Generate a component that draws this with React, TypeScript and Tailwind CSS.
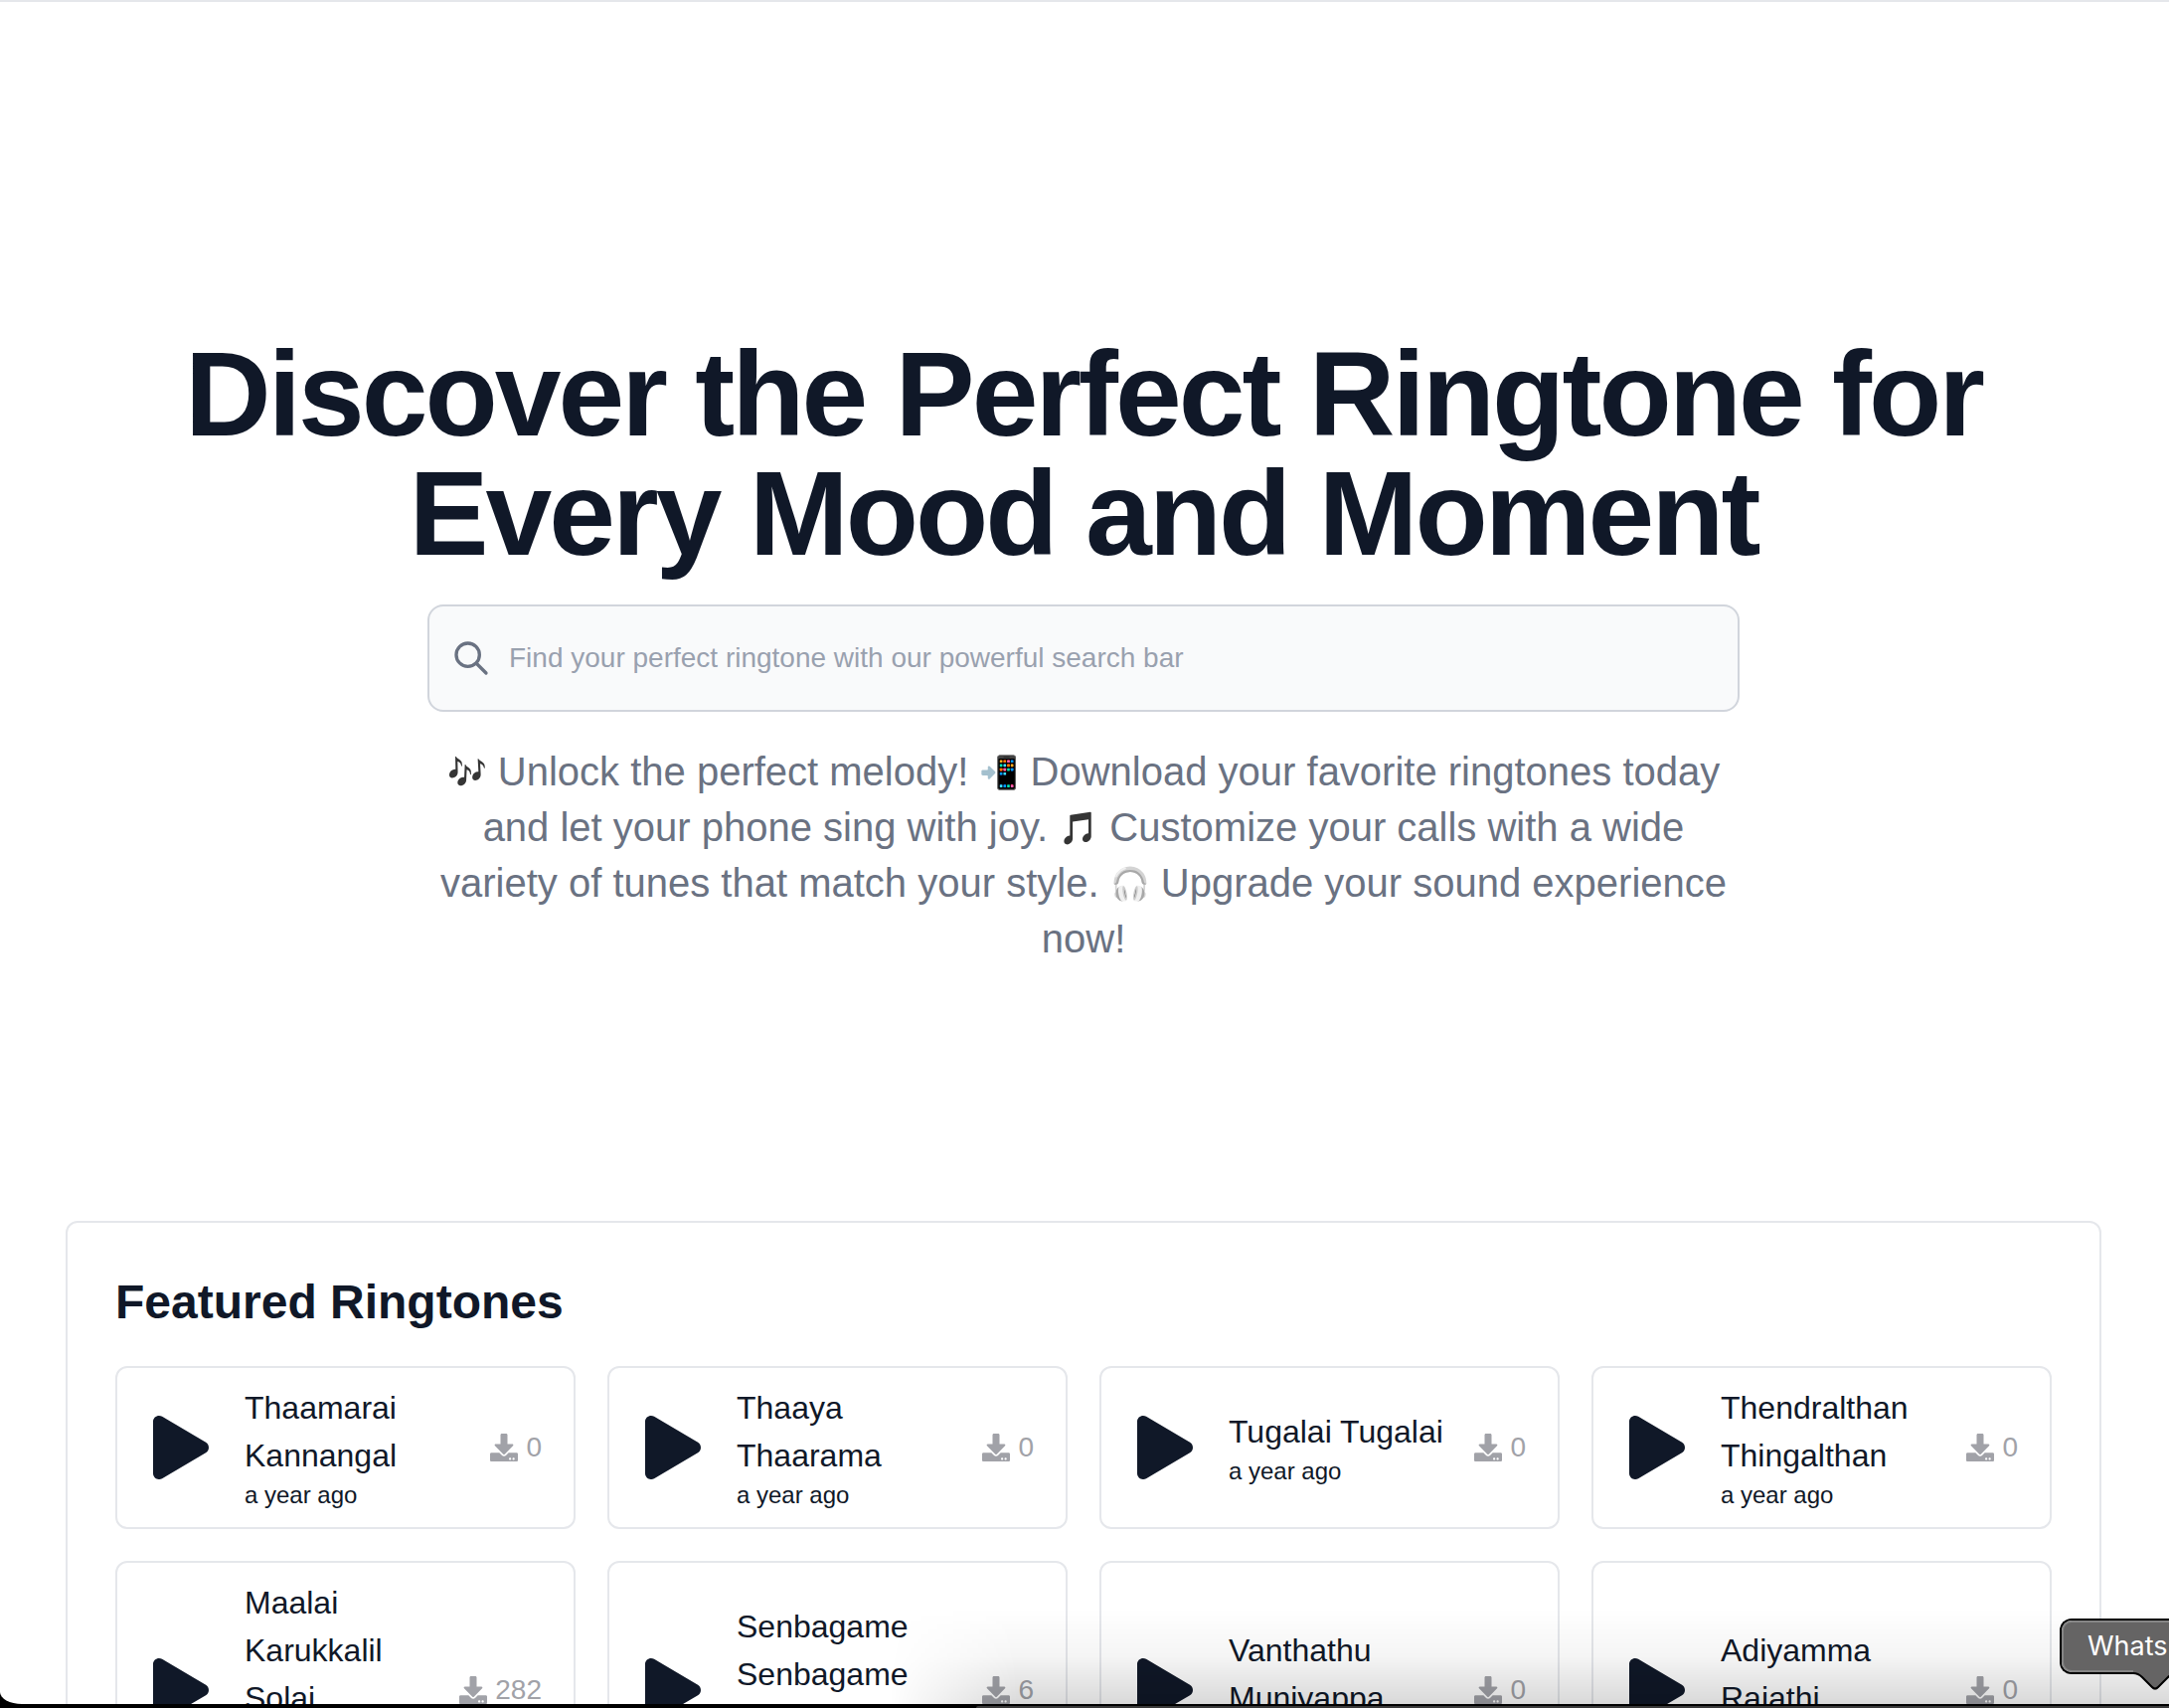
import { FaDownload, FaPlay } from "react-icons/fa";

type Ringtone = { name: string; downloads: number; nameHeight?: string };

const ringtones: Ringtone[] = [
  { name: "Thaamarai Kannangal", downloads: 0 },
  { name: "Thaaya Thaarama", downloads: 0 },
  { name: "Tugalai Tugalai", downloads: 0 },
  { name: "Thendralthan Thingalthan", downloads: 0 },
  { name: "Maalai Karukkalil Solai", downloads: 282, nameHeight: "min-h-48" },
  { name: "Senbagame Senbagame", downloads: 6, nameHeight: "min-h-36" },
  { name: "Vanthathu Muniyappa", downloads: 0 },
  { name: "Adiyamma Rajathi", downloads: 0 },
];

function SearchIcon() {
  return (
    <svg className="size-10 shrink-0 text-gray-500" viewBox="0 0 24 24" fill="none" stroke="currentColor" strokeWidth="2" strokeLinecap="round" strokeLinejoin="round" aria-hidden="true">
      <path d="M21 21l-6-6m2-5a7 7 0 11-14 0 7 7 0 0114 0z" />
    </svg>
  );
}

function Emoji({ children, tone = "" }: { children: string; tone?: string }) {
  return <span className={`inline-block align-[2px] text-[32px] leading-none ${tone}`}>{children}</span>;
}

function RingtoneCard({ name, downloads, nameHeight = "" }: Ringtone) {
  return (
    <li className="flex items-center gap-6 rounded-xl border-2 border-gray-200 px-8 py-4">
      <button type="button" aria-label={`Play ${name}`} className="mr-2 shrink-0">
        <FaPlay className="size-16" />
      </button>
      <div className="min-w-0 flex-1">
        <h3 className={`text-[32px] leading-[48px] ${nameHeight}`}>{name}</h3>
        <p className="text-2xl">a year ago</p>
      </div>
      <div className="flex shrink-0 items-center gap-2 text-[28px] leading-10 text-[#a1a2a8]">
        <FaDownload className="size-7" />
        <span>{downloads}</span>
      </div>
    </li>
  );
}

function DockTooltip() {
  return (
    <div role="tooltip" className="absolute right-0 bottom-[34px] w-[110px]">
      <div className="rounded-l-xl border-2 border-r-0 border-black">
        <div className="flex h-[52px] items-center rounded-l-[10px] border-2 border-r-0 border-[#858585] bg-[#656464] pl-6 font-['Inter',sans-serif] text-[27px] leading-8 whitespace-nowrap text-white">
          Whats
        </div>
      </div>
      <svg className="absolute top-[52px] left-[74px] h-5 w-11" viewBox="0 0 44 20" aria-hidden="true">
        <path d="M0 0H44V3C40 3 38 4 35 7L25 18Q22 21 19 18L9 7C6 4 4 3 0 3Z" fill="#656464" />
        <path d="M0 3C4 3 6 4 9 7L19 17Q22 20 25 17L35 7C38 4 40 3 44 3" fill="none" stroke="#000" strokeWidth="2" />
      </svg>
    </div>
  );
}

export default function App() {
  return (
    <div className="relative h-screen overflow-hidden bg-black pb-1 font-['Liberation_Sans',Arial,sans-serif] text-gray-900">
      <div className="h-full overflow-hidden rounded-bl-[22px_12px] border-t-2 border-gray-200 bg-white">
        <main className="mx-auto w-full max-w-[2050px] pr-0.5">
          <section className="flex flex-col items-center pt-[334px] text-center">
            <h1 className="text-[120px] leading-[120px] font-bold tracking-tight">
              Discover the Perfect Ringtone for Every Mood and Moment
            </h1>
            <label className="mt-8 flex h-[108px] w-full max-w-[1320px] items-center gap-[18px] rounded-2xl border-2 border-gray-300 bg-gray-50 px-[22px]">
              <SearchIcon />
              <input
                type="search"
                aria-label="Search ringtones"
                placeholder="Find your perfect ringtone with our powerful search bar"
                className="min-w-0 flex-1 bg-transparent text-[28px] leading-10 outline-none placeholder:text-gray-400"
              />
            </label>
            <p className="mt-8 max-w-[1320px] text-[40px] leading-[56px] text-gray-500">
              <Emoji tone="grayscale brightness-50">🎶</Emoji> Unlock the perfect melody!{" "}
              <Emoji tone="saturate-200">📲</Emoji> Download your favorite ringtones today and let your phone sing with joy.{" "}
              <Emoji tone="grayscale brightness-50">🎵</Emoji> Customize your calls with a wide variety of tunes that match your style.{" "}
              <Emoji tone="grayscale brightness-200 opacity-70">🎧</Emoji> Upgrade your sound experience now!
            </p>
          </section>
          <section className="mt-64 rounded-xl border-2 border-gray-200 p-12">
            <h2 className="text-5xl leading-[64px] font-bold">Featured Ringtones</h2>
            <ul className="mt-8 grid grid-cols-4 gap-8">
              {ringtones.map((r) => (
                <RingtoneCard key={r.name} {...r} />
              ))}
            </ul>
          </section>
        </main>
      </div>
      <div className="pointer-events-none absolute right-0 bottom-1 left-[41%] h-24 bg-linear-to-t from-black/15 via-black/4 to-transparent mask-l-from-90%" />
      <div className="absolute right-0 bottom-0 left-[45%] h-0.5 rounded-tl-lg bg-[#3a3a3a]" />
      <DockTooltip />
    </div>
  );
}
